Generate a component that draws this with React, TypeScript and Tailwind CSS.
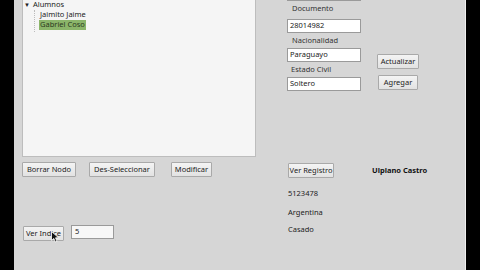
const font = { fontFamily: '"Noto Sans", "Open Sans", sans-serif' };

function Btn({ label, className = "" }: { label: string; className?: string }) {
  return (
    <div
      className={`flex h-[15px] items-center justify-center rounded-[1px] border border-[#a9a9a9] bg-gradient-to-b from-[#f4f4f4] to-[#e2e2e2] text-[7.5px] leading-none text-[#222] ${className}`}
    >
      {label}
    </div>
  );
}

function Field({ value }: { value: string }) {
  return (
    <div className="flex h-[14px] w-[74px] items-center border border-[#9a9a9a] bg-white pl-[2px] text-[7.5px] leading-none text-[#222]">
      {value}
    </div>
  );
}

function Label({ text, indent = "pl-[5px]" }: { text: string; indent?: string }) {
  return <div className={`h-[15px] ${indent} flex items-center text-[7.5px] leading-none text-[#333]`}>{text}</div>;
}

function Cursor() {
  return (
    <svg className="absolute left-[37px] top-[231px]" width="9" height="12" viewBox="0 0 9 12">
      <path d="M0.5 0.5 L0.5 9.5 L2.8 7.4 L4.4 11 L6 10.3 L4.5 6.8 L7.6 6.8 Z" fill="#111" stroke="#fff" strokeWidth="0.8" />
    </svg>
  );
}

export default function App() {
  return (
    <div className="flex h-[270px] w-[480px] overflow-hidden bg-black" style={font}>
      <div className="w-[14px] shrink-0 bg-black" />
      <div className="relative flex w-[451px] shrink-0 flex-col bg-[#d6d6d6]">
        {/* top: tree + form */}
        <div className="flex h-[157px]">
          <div className="ml-[8px] mt-[-2px] h-[159px] w-[234px] border border-[#bdbdbd] bg-[#f5f5f5] px-[1px] pt-[1px] text-[7.5px] leading-none text-[#222]">
            <div className="flex h-[10px] items-center gap-[3px]">
              <span className="text-[6px]">▼</span>
              <span>Alumnos</span>
            </div>
            <div className="ml-[10px] border-l border-dotted border-[#bcbcbc] pl-[5px]">
              <div className="flex h-[10px] items-center">Jaimito Jaime</div>
              <div className="-ml-[1px] flex h-[10px] w-fit items-center bg-[#8bb56a] px-[1px] text-[#2b3a1e]">Gabriel Coso</div>
              <div className="h-[2px]" />
            </div>
          </div>
          <div className="ml-[31px] flex">
            <div className="flex flex-col">
              <div className="mt-[-13px] h-[14px] w-[74px] border border-[#9a9a9a] bg-white" />
              <Label text="Documento" />
              <div className="mt-[3px]">
                <Field value="28014982" />
              </div>
              <Label text="Nacionalidad" />
              <Field value="Paraguayo" />
              <Label text="Estado Civil" indent="pl-[4px]" />
              <Field value="Soltero" />
            </div>
            <div className="ml-[16px] flex flex-col">
              <Btn label="Actualizar" className="mt-[54px] w-[42px]" />
              <Btn label="Agregar" className="ml-[1px] mt-[6px] w-[40px]" />
            </div>
          </div>
        </div>
        {/* bottom */}
        <div className="flex">
          <div className="flex w-[273px] flex-col pl-[8px]">
            <div className="mt-[5px] flex">
              <Btn label="Borrar Nodo" className="w-[54px]" />
              <Btn label="Des-Seleccionar" className="ml-[13px] w-[66px]" />
              <Btn label="Modificar" className="ml-[16px] w-[41px]" />
            </div>
            <div className="mt-[48px] flex items-start">
              <Btn label="Ver Indice" className="ml-[1px] mt-[1px] w-[41px]" />
              <div className="ml-[7px] flex h-[14px] w-[43px] items-center border border-[#9a9a9a] bg-[#f7f7f7] pl-[3px] text-[7.5px] leading-none text-[#222]">
                5
              </div>
            </div>
          </div>
          <div className="flex flex-col pl-[1px]">
            <div className="mt-[6px] flex items-center">
              <Btn label="Ver Registro" className="w-[46px]" />
              <div className="ml-[38px] text-[7.5px] font-bold leading-none text-[#111]">Ulpiano Castro</div>
            </div>
            <div className="mt-[12px] text-[7.5px] leading-none text-[#222]">5123478</div>
            <div className="mt-[11px] text-[7.5px] leading-none text-[#222]">Argentina</div>
            <div className="mt-[10px] text-[7.5px] leading-none text-[#222]">Casado</div>
          </div>
        </div>
        <Cursor />
      </div>
      <div className="w-[1px] shrink-0 bg-[#f0f0f0]" />
      <div className="flex-1 bg-black" />
    </div>
  );
}
